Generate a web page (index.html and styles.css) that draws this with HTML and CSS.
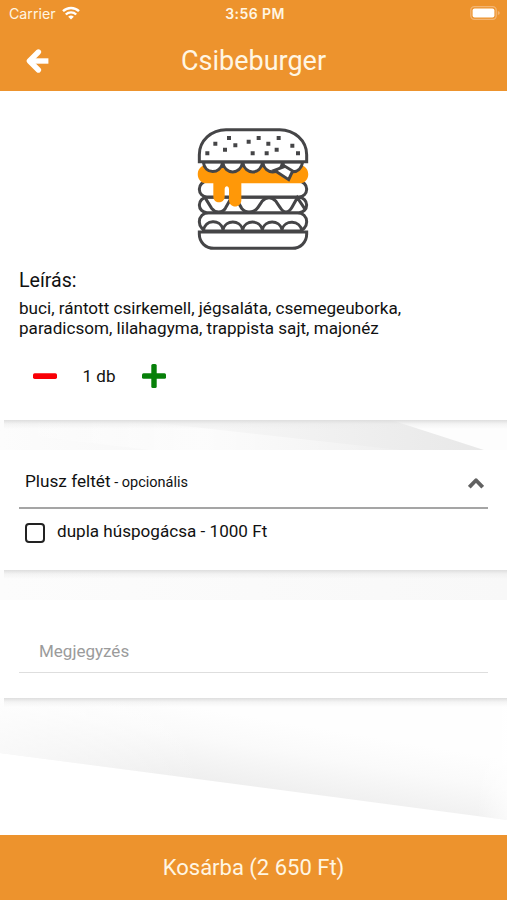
FILE: index.html
```html
<!DOCTYPE html>
<html lang="hu">
<head>
<meta charset="utf-8">
<title>Csibeburger</title>
<link rel="stylesheet" href="styles.css">
</head>
<body>
<div class="app">
  <header class="header">
    <div class="status">
      <div class="carrier"><span>Carrier</span>
        <svg width="18" height="14" viewBox="0 0 18 14" fill="none" stroke="#fff" stroke-width="2.4"><path d="M1 5.2a11.5 11.5 0 0 1 16 0M3.8 8.5a7.5 7.5 0 0 1 10.4 0"/><path d="M9 13.6 6.2 10.8a4 4 0 0 1 5.6 0Z" fill="#fff" stroke="none"/></svg>
      </div>
      <span class="clock">3:56 PM</span>
      <svg class="battery" width="31" height="14" viewBox="0 0 31 14"><rect x=".8" y=".7" width="25.4" height="12.6" rx="3.5" fill="none" stroke="#f3b573" stroke-width="1.3"/><rect x="2.6" y="2.4" width="21.8" height="9.2" rx="2" fill="#fff"/><path d="M27.8 5v4q2-.5 2-2t-2-2" fill="#f3b573"/></svg>
    </div>
    <div class="nav">
      <svg class="back" width="24" height="26" viewBox="0 0 24 26" fill="none" stroke="#fff" stroke-width="5.4"><path d="M13.4 4 4.4 13l9 9" stroke-linejoin="round" stroke-linecap="round"/><path d="M5 13h18.4"/></svg>
      <h1>Csibeburger</h1>
    </div>
  </header>

  <main>
    <section class="card product">
      <svg class="burger" width="130" height="136" viewBox="0 0 390 408" fill="#fff" stroke="#454547" stroke-width="9">
        <rect x="31" y="278" width="322" height="55" rx="27"/>
        <rect x="31" y="232" width="322" height="46" rx="23"/>
        <rect x="31" y="184" width="322" height="47" rx="23"/>
        <path d="M48 233l20 32q8 11 21 11t20-11l18-32M140 233l18 32q8 11 22 11 18 0 27-14l12-18q21-22 42 0l12 18q8 14 18 14t18-14l16-29 24 36" fill="none"/>
        <path d="M51 134h282c33 4 33 54 0 56H157v50c0 26-37 26-37 0v-32c0-12-13-12-13 0v22c0 22-34 22-34 0v-40H51c-33-2-33-52 0-56Z" fill="#ff9808" stroke="none"/>
        <path d="M43 126c4 38 51 38 58 2 8 37 52 37 60 0 8 37 52 37 60 0 8 37 52 37 60 0 8 37 54 37 60-2Z"/>
        <path d="m256 151 43 28 12-26-23-14Z"/>
        <path d="M31 125V104C31 62 67 29 111 29h161c44 0 81 33 81 75v21Z"/>
        <path d="M43 333c5-36 51-36 59-5 8-29 51-29 59 0 8-29 51-29 59 0 8-29 51-29 59 0 8-29 54-29 60 5Z"/>
        <path d="M31 336h322v7c0 24-19 42-43 42H75c-25 0-44-18-44-42Z"/>
        <path d="M114 48h12v12h-12zM73 65h12v12H73zM49 94h12v12H49zM102 83h12v12h-12zM133 70h12v12h-12zM173 59h12v12h-12zM203 48h12v12h-12zM185 94h12v12h-12zM227 94h12v12h-12zM232 65h12v12h-12zM263 48h12v12h-12zM257 83h12v12h-12zM304 71h12v12h-12zM321 94h12v12h-12z" fill="#454547" stroke="none"/>
      </svg>
      <h2>Leírás:</h2>
      <p class="description">buci, rántott csirkemell, jégsaláta, csemegeuborka,<br>paradicsom, lilahagyma, trappista sajt, majonéz</p>
      <div class="quantity">
        <svg width="24" height="24" viewBox="0 0 24 24"><rect y="9.3" width="24" height="5.6" rx="1.7" fill="#f90006"/></svg>
        <span class="amount">1 db</span>
        <svg width="24" height="24" viewBox="0 0 24 24" fill="#078009"><rect y="9.3" width="24" height="5.4" rx="1.5"/><rect x="9.3" width="5.4" height="24" rx="1.5"/></svg>
      </div>
    </section>

    <div class="gap">
      <svg width="507" height="30" viewBox="0 0 507 30">
        <defs>
          <linearGradient id="beam"><stop stop-color="#fcfcfc"/><stop offset=".45" stop-color="#f6f6f6"/><stop offset="1" stop-color="#e8e8e8"/></linearGradient>
          <linearGradient id="ray"><stop stop-color="#fff" stop-opacity="0"/><stop offset=".5" stop-color="#fff" stop-opacity=".65"/><stop offset="1" stop-color="#fff" stop-opacity=".1"/></linearGradient>
        </defs>
        <path d="M0 0h391l93 30H0Z" fill="url(#beam)"/>
        <path d="M130 0 400 30H150L0 12V0Z" fill="url(#ray)"/>
      </svg>
    </div>

    <section class="card extras">
      <div class="extras-head">
        <span><span class="extras-title">Plusz feltét</span><small> - opcionális</small></span>
        <svg width="16" height="12" viewBox="0 0 16 12" fill="none" stroke="#616161" stroke-width="3.8"><path d="m1.3 10.2 6.7-7 6.7 7" stroke-linejoin="round"/></svg>
      </div>
      <label class="option"><input type="checkbox"><span>dupla húspogácsa - 1000 Ft</span></label>
    </section>

    <div class="gap plain"></div>

    <section class="card note">
      <input type="text" placeholder="Megjegyzés">
    </section>

    <div class="backdrop">
      <svg width="507" height="137" viewBox="0 0 507 137">
        <defs><linearGradient id="fold" gradientUnits="userSpaceOnUse" x1="260" y1="20" x2="248" y2="92"><stop stop-color="#fefefe"/><stop offset=".4" stop-color="#fafafa"/><stop offset="1" stop-color="#eeeeee"/></linearGradient>
        <linearGradient id="side"><stop stop-color="#fff" stop-opacity=".65"/><stop offset=".4" stop-color="#fff" stop-opacity="0"/><stop offset=".94" stop-color="#fff" stop-opacity="0"/><stop offset="1" stop-color="#fff" stop-opacity=".6"/></linearGradient></defs>
        <path d="M0 0h507v122L0 55Z" fill="url(#fold)"/>
        <path d="M0 0h507v122L0 55Z" fill="url(#side)"/>
      </svg>
    </div>
  </main>
  <button class="cart"><span>Kosárba (2 650 Ft)</span></button>
</div>
</body>
</html>
```
FILE: styles.css
```css
* { box-sizing: border-box; }
body { margin: 0; font-family: Roboto, sans-serif; color: #111; background: #fff; }
svg { display: block; flex: none; }
h1, h2, p { margin: 0; font-weight: 400; }
.app { width: 507px; height: 900px; display: flex; flex-direction: column; overflow: hidden; }
.header { height: 91px; flex: none; background: #ed932d; color: #fff6e3; }
.status { height: 28px; display: grid; grid-template-columns: 1fr auto 1fr; align-items: center; padding: 0 6px 2px 9px; font-family: Inter, sans-serif; font-size: 14.2px; }
.carrier { display: flex; align-items: center; gap: 6px; }
.clock { font-weight: 600; font-size: 14px; letter-spacing: .4px; }
.battery { justify-self: end; }
.nav { height: 63px; display: grid; grid-template-columns: 48px 1fr 48px; align-items: center; padding: 2px 0 0; }
.back { margin-left: 25px; }
h1 { text-align: center; font-size: 27px; line-height: 32px; }
main { flex: 1; }
.card { position: relative; background: #fff; }
.card::after { content: ""; position: absolute; z-index: 1; left: 4px; right: 0; top: 100%; height: 9px; background: linear-gradient(#dedede, rgba(235, 235, 235, .5) 45%, rgba(255, 255, 255, 0)); }
.product { height: 329px; padding: 29px 19px 0; }
.burger { margin: 0 auto; position: relative; left: .5px; }
h2 { margin-top: 13px; font-size: 19.6px; line-height: 24px; }
.description { margin-top: 5px; font-size: 17.1px; line-height: 20px; white-space: nowrap; }
.quantity { display: flex; align-items: center; margin: 26px 0 0 14px; font-size: 17px; }
.amount { width: 85px; padding-right: 1px; text-align: center; }
.gap { height: 30px; background: #fdfdfd; }
.plain { background: linear-gradient(90deg, #fcfcfc, #f8f8f8); }
.extras { height: 120px; padding: 0 19px; }
.extras-head { height: 59px; display: flex; align-items: center; justify-content: space-between; padding: 5px 4px 0 6px; border-bottom: 2px solid #a5a5a5; }
.extras-head svg { margin-top: 3px; }
.extras-title { font-size: 17.2px; }
.extras small { font-size: 14.5px; }
.option { display: flex; align-items: center; gap: 12px; padding: 10px 0 0 6px; font-size: 17.1px; line-height: 24px; }
.option input { appearance: none; width: 20px; height: 20px; margin: 3px 0 0; border: 2px solid #222; border-radius: 4px; }
.note { height: 98px; padding: 29px 19px 0; }
.note input { width: 100%; height: 44px; padding: 0 20px; border: 0; border-bottom: 1px solid #dedede; outline: 0; background: none; font: 17px Roboto, sans-serif; }
.note input::placeholder { color: #9b9b9b; opacity: 1; }
.backdrop { height: 137px; }
.cart { height: 65px; flex: none; border: 0; padding: 0; background: #ed932d; color: #fff6e3; font: 22px Roboto, sans-serif; }
```
